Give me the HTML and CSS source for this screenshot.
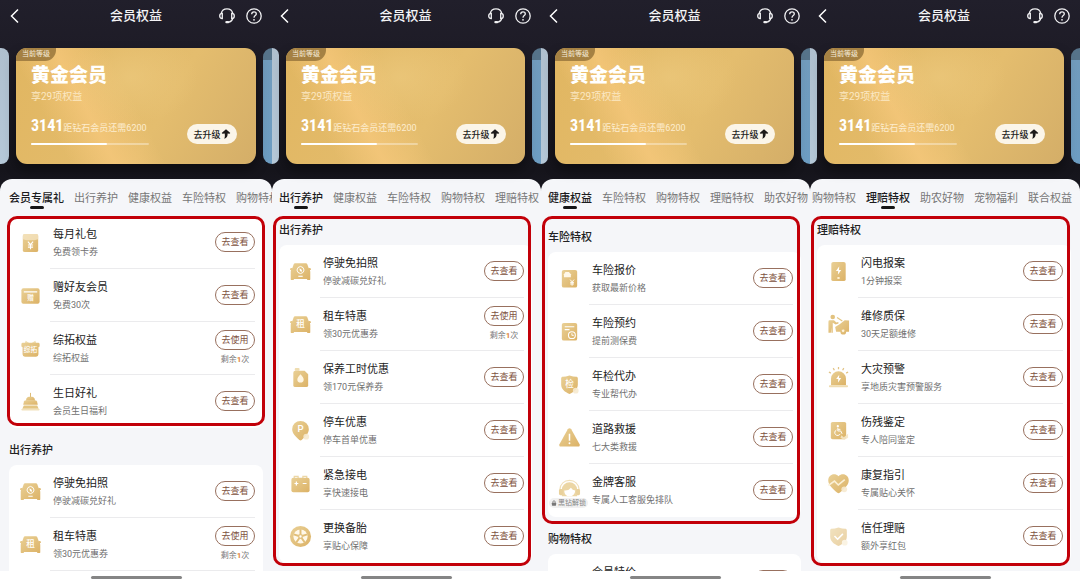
FILE: index.html
```html
<!DOCTYPE html>
<html lang="zh-CN">
<head>
<meta charset="utf-8">
<meta name="viewport" content="width=device-width, initial-scale=1">
<title>会员权益</title>
<link rel="stylesheet" href="styles.css">
</head>
<body>
<svg class="sprite" aria-hidden="true">
  <defs>
    <linearGradient id="gold" x1="0" y1="0" x2="1" y2="1"><stop offset="0" stop-color="#e9d096"/><stop offset="1" stop-color="#dcb266"/></linearGradient>
    <linearGradient id="fade" x1="0" y1="0" x2="0" y2="1"><stop offset="0" stop-color="#f3e3bd"/><stop offset="1" stop-color="#e2c383"/></linearGradient>
  </defs>
  <symbol id="back" viewBox="0 0 10 16"><path d="M8.500 1.500 2 8l6.500 6.500" fill="none" stroke="#fff" stroke-width="1.500"/></symbol>
  <symbol id="headset" viewBox="0 0 18 18"><g fill="none" stroke="#f1f1f3" stroke-width="1.300"><path d="M3.200 6.500C3.800 3.500 6 1.800 9 1.800s5.200 1.700 5.800 4.700M14.800 11.300c-.5 2.200-1.800 3.300-3.800 3.900"/><path d="M4.300 6.300v5.200C2.600 11.500 1.700 10.500 1.700 8.900S2.600 6.300 4.300 6.300ZM13.700 6.300v5.200c1.700 0 2.600-1 2.600-2.600s-.9-2.600-2.600-2.600Z"/></g><rect x="7.300" y="14" width="4" height="2.300" rx="1.100" fill="#f1f1f3"/></symbol>
  <symbol id="help" viewBox="0 0 18 18"><g fill="none" stroke="#f1f1f3" stroke-width="1.300"><circle cx="9" cy="9" r="7.200"/><path d="M6.700 7.200c0-1.500 1-2.300 2.300-2.300s2.300.8 2.300 2.100c0 1.600-2.300 1.700-2.300 3.700"/></g><circle cx="9" cy="12.800" r=".9" fill="#f1f1f3"/></symbol>
  <symbol id="up" viewBox="0 0 10 10"><path d="M5 .2 9.300 4 8.500 4.800 6.600 4.500C6.800 7 6 8.800 3.200 9.800 4 8.300 4 6.500 3.700 4.500L1.400 4.800.7 4Z" fill="#1c1a19"/></symbol>
  <symbol id="packet" viewBox="0 0 24 24"><rect x="4" y="3" width="16" height="19" rx="2" fill="url(#gold)"/><path d="M4 5a2 2 0 0 1 2-2h12a2 2 0 0 1 2 2v3.500q-8 2.500-16 0Z" fill="#f5e6c4" opacity=".75"/><path d="m9.300 11 2.700 3.200 2.700-3.200M12 14v5M9.300 14.600h5.400M9.300 16.800h5.400" fill="none" stroke="#fff" stroke-width="1.200"/></symbol>
  <symbol id="card" viewBox="0 0 24 24"><rect x="2.500" y="4.500" width="19" height="16" rx="2" fill="url(#gold)"/><path d="M5 8.200h14" stroke="#fff" stroke-width="1.200"/></symbol>
  <symbol id="gift" viewBox="0 0 24 24"><path d="M6 6.500 7 4l4 2.500M18 6.500 17 4l-4 2.500" fill="#efddb1"/><path d="M4 6h16a1.500 1.500 0 0 1 1.500 1.500V10l-1.200.7V18a2.500 2.500 0 0 1-2.500 2.500H6.200A2.500 2.500 0 0 1 3.700 18v-7.300L2.500 10V7.500A1.500 1.500 0 0 1 4 6Z" fill="url(#gold)"/></symbol>
  <symbol id="cake" viewBox="0 0 24 24"><path d="M12 3v5" stroke="#dcb970" stroke-width="1"/><path d="M8 8.500q1-1.500 2.500-1.500h3q1.500 0 2.500 1.500l1 2.700H7Z" fill="url(#gold)"/><path d="M6.500 11h11q1 0 1.300 1l.8 3.500H4.400l.8-3.500q.3-1 1.300-1Z" fill="url(#gold)"/><path d="M5 16.300h14l1.500 3.200h-17Z" fill="#e3c583"/><rect x="2.500" y="19.500" width="19" height="1.800" rx=".9" fill="#f1e1bb"/></symbol>
  <symbol id="car" viewBox="0 0 24 24"><path d="M7 3.500h10c1.200 0 1.900.5 2.300 1.500l1.300 3.700c.6-.5 1.800-.5 2.300.3.300.6 0 1.300-1 1.500l.3 1.800v7.700c0 .6-.3.900-.9.900h-1.500c-.6 0-.9-.5-1.100-1.200H5.300c-.2.700-.5 1.200-1.100 1.200H2.700c-.6 0-.9-.3-.9-.9v-7.700l.3-1.800c-1-.2-1.300-.9-1-1.500.5-.8 1.700-.8 2.300-.3L4.700 5c.4-1 1.100-1.500 2.300-1.500Z" fill="url(#gold)"/></symbol>
  <symbol id="car-leaf" viewBox="0 0 24 24"><use href="#car"/><path d="m12 6.700 2.600 1.200 1.100 2.600-1.100 2.500-2.600 1.200L9.400 13l-1.100-2.500 1.100-2.600Z" fill="none" stroke="#fff" stroke-width="1"/><path d="M11 8.800q3 .8 2.500 3.400-2.700 0-2.500-3.400Z" fill="#fff"/><path d="M9.700 17h4.600" stroke="#fff" stroke-width="1.200"/></symbol>
  <symbol id="oil" viewBox="0 0 24 24"><rect x="6" y="2" width="5" height="3" rx="1" fill="#efddb1"/><path d="M6.500 5h9.800L20 8.500V20a2 2 0 0 1-2 2H6.500a2 2 0 0 1-2-2V7a2 2 0 0 1 2-2Z" fill="url(#gold)"/><path d="M12 8.500c2 2.200 3.300 3.700 3.300 5.500a3.300 3.300 0 0 1-6.600 0c0-1.800 1.300-3.300 3.300-5.500Z" fill="#fff6e2"/></symbol>
  <symbol id="pin" viewBox="0 0 24 24"><path d="M12 2a8.700 8.700 0 0 1 8.700 8.700c0 4.500-3.900 7.800-7.500 11.200q-1.200 1-2.400 0C7.200 18.500 3.300 15.200 3.300 10.700A8.700 8.700 0 0 1 12 2Z" fill="url(#gold)"/><circle cx="18" cy="18.500" r="3" fill="#f6ead0" opacity=".9"/></symbol>
  <symbol id="battery" viewBox="0 0 24 24"><path d="M5.500 7V4.500h4V7M14.500 7V4.500h4V7" fill="none" stroke="#ecd7a7" stroke-width="1.300"/><rect x="2.500" y="6" width="19" height="15" rx="2" fill="url(#gold)"/><path d="M5.700 12h4M7.700 10v4M14.300 12h4" stroke="#fff" stroke-width="1.300"/></symbol>
  <symbol id="wheel" viewBox="0 0 24 24"><circle cx="12" cy="12" r="11" fill="url(#gold)"/><circle cx="12" cy="12" r="7.400" fill="#fff8e9"/><g stroke="#e1be78" stroke-width="2"><path d="M12 12V4.500M12 12l7.100-2.300M12 12l4.400 6.100M12 12l-4.400 6.100M12 12 4.900 9.700"/></g><circle cx="12" cy="12" r="2.600" fill="#e4c484"/><circle cx="12" cy="12" r="1.200" fill="#fff"/></symbol>
  <symbol id="quote" viewBox="0 0 24 24"><rect x="4" y="3" width="16" height="18.500" rx="2" fill="url(#gold)"/><path d="M6.200 10.800V7.500L7.700 5.300h3.700l2 2.200v3.300Z" fill="#fff8e9"/><path d="m12.700 13.200 2 2.300 2-2.300M14.700 15.500v4M12.700 16h4M12.700 17.700h4" fill="none" stroke="#fff" stroke-width="1"/></symbol>
  <symbol id="booking" viewBox="0 0 24 24"><rect x="4" y="3" width="16" height="18.500" rx="2" fill="url(#gold)"/><path d="M7 7h10M7 10h5" stroke="#fff" stroke-width="1.200"/><circle cx="14.500" cy="15.800" r="3.600" fill="#e0ba72" stroke="#fff" stroke-width="1.100"/><path d="M14.500 13.800V16h2" fill="none" stroke="#fff"/></symbol>
  <symbol id="shield" viewBox="0 0 24 24"><path d="M12 2.500q4 1.500 7 1.500c1 0 1.700.6 1.700 1.600V12c0 5-4 7.800-8.700 10C7.300 19.800 3.300 17 3.300 12V5.600C3.300 4.600 4 4 5 4q3 0 7-1.500Z" fill="url(#gold)"/></symbol>
  <symbol id="inspect" viewBox="0 0 24 24"><use href="#shield"/><circle cx="18.500" cy="18.500" r="3" fill="#f6ead0" opacity=".9"/></symbol>
  <symbol id="warn" viewBox="0 0 24 24"><path d="M10.200 3.300q1.800-2 3.600 0L22.500 19q.8 2.500-1.500 2.500H3Q.7 21.500 1.500 19Z" fill="url(#gold)"/><path d="M12 8v7.500" stroke="#fff" stroke-width="1.600"/><circle cx="12" cy="18" r="1" fill="#fff"/></symbol>
  <symbol id="agent" viewBox="0 0 24 24"><path d="M2 11C2.500 5 6.500 1.500 12 1.500S21.500 5 22 11" fill="none" stroke="#f0dfb8" stroke-width="1.300"/><path d="M4 11a8 7.500 0 0 1 16 0v7H4Z" fill="#ecd6a4"/><path d="M6.500 12q4.500.5 7-3 1.500 2.500 4.500 3-.5 6-6 6t-5.500-6Z" fill="#fff"/><rect x="1" y="10.500" width="4" height="6.500" rx="1.500" fill="#e9d19b"/><rect x="19" y="10.500" width="4" height="6.500" rx="1.500" fill="#e9d19b"/></symbol>
  <symbol id="lock" viewBox="0 0 8 8"><path d="M2.500 4V2.500a1.500 1.500 0 0 1 3 0V4" fill="none" stroke="#777"/><rect x="1.200" y="3.500" width="5.600" height="4" rx=".7" fill="#777"/></symbol>
  <symbol id="phone-bolt" viewBox="0 0 24 24"><rect x="4.500" y="2" width="15" height="20" rx="2" fill="url(#gold)"/><path d="M12.800 6.500 9.300 11.500h2.400l-.4 4 3.500-5h-2.300Z" fill="#fff"/><ellipse cx="12" cy="18.800" rx="1.500" ry="1" fill="#fff3d7"/></symbol>
  <symbol id="mechanic" viewBox="0 0 24 24"><circle cx="6" cy="4.200" r="2.400" fill="#e2c27f"/><path d="M2.800 7.500h4.500l2.500 2.300 2-.3.200 1.400-3 1L6 10.300V20.500H4.600V15L4 20.500H1.500V9Q1.500 7.500 2.800 7.500Z" fill="url(#gold)"/><path d="m8.500 14.500 5-3 5-4 4.500.3v11.700h-3a3 3 0 0 1-6 0H9.500Z" fill="url(#gold)"/><path d="m10.500 4.800 5.500 3.500" stroke="#e3c581" stroke-width="1.200"/><circle cx="16.800" cy="18.500" r="1.900" fill="#fff3dc" stroke="#e1bf7a"/></symbol>
  <symbol id="siren" viewBox="0 0 24 24"><path d="M12 1v2.500M6.500 2.200l1.200 2.200M17.500 2.200l-1.200 2.200M2 6.200l2 1.200M22 6.200l-2 1.200" stroke="#e2c384" stroke-width="1.300"/><path d="M4.200 20v-7a7.800 7.500 0 0 1 15.600 0v7Z" fill="url(#gold)"/><rect x="2" y="20.200" width="20" height="2" rx="1" fill="#efdcb0"/><path d="m12.800 9-3.300 4.600h2.300l-.4 3.800 3.400-4.800h-2.300Z" fill="#fff"/></symbol>
  <symbol id="wheelchair" viewBox="0 0 24 24"><rect x="4" y="3" width="16" height="18" rx="1.800" fill="url(#gold)"/><circle cx="11.300" cy="7.500" r="1.200" fill="#fff"/><path d="M11.300 9v3.500h3l1.500 3M11.500 10.800h2.500M9.800 11.500a3 3 0 1 0 4 4" fill="none" stroke="#fff" stroke-width="1"/><path d="m15 17 2.500 2L22 15.500v4L18 22l-4-2.500Z" fill="#f4e6c6" opacity=".9"/></symbol>
  <symbol id="heart" viewBox="0 0 24 24"><path d="M12 4.500c4-4.200 10.700-1.700 10.700 4.300 0 5-5.200 9-9.500 12.800q-1.200 1-2.400 0C6.500 17.800 1.300 13.800 1.300 8.800c0-6 6.700-8.500 10.700-4.300Z" fill="url(#gold)"/><path d="m1.500 14 6.300-4.500 4 4L18.500 8" fill="none" stroke="#fbf0d6" stroke-width="1.600"/><circle cx="18" cy="18" r="3" fill="#f6ead0" opacity=".9"/></symbol>
  <symbol id="trust" viewBox="0 0 24 24"><g opacity=".6"><use href="#shield"/></g><path d="m7.800 11.500 3.300 3.300 5.500-5.500" fill="none" stroke="#fff" stroke-width="1.600"/><circle cx="18.500" cy="18.500" r="3" fill="#faf3e3"/></symbol>
  <symbol id="tag" viewBox="0 0 24 24"><rect x="4" y="3" width="16" height="18" rx="2" fill="url(#fade)"/></symbol>
</svg>

<main class="screens">
  <section class="phone phone-first">
    <header class="bar">
      <button class="icon-btn" aria-label="返回"><svg class="back"><use href="#back"/></svg></button>
      <h1 class="bar-title">会员权益</h1>
      <div class="bar-tools"><button class="icon-btn" aria-label="客服"><svg class="tool"><use href="#headset"/></svg></button><button class="icon-btn" aria-label="帮助"><svg class="tool"><use href="#help"/></svg></button></div>
    </header>
    <div class="levels">
      <div class="peek peek-left"></div>
      <article class="level">
        <span class="level-flag">当前等级</span>
        <h2 class="level-name">黄金会员</h2>
        <p class="level-count">享29项权益</p>
        <p class="level-score"><b class="score">3141</b><span>距钻石会员还需6200</span></p>
        <div class="meter"><div class="meter-fill"></div></div>
        <button class="upgrade">去升级<svg class="up"><use href="#up"/></svg></button>
      </article>
      <div class="peek peek-right"></div>
    </div>
    <div class="sheet">
      <nav class="tabs"><a class="tab tab-on" href="#">会员专属礼</a><a class="tab" href="#">出行养护</a><a class="tab" href="#">健康权益</a><a class="tab" href="#">车险特权</a><a class="tab" href="#">购物特权</a></nav>
      <div class="scroll"><div class="track">
        <ul class="list">
          <li class="row"><div class="pic"><svg class="ico"><use href="#packet"/></svg></div><div class="body"><div class="text"><h4 class="name">每月礼包</h4><p class="note">免费领卡券</p></div><div class="act"><button class="go">去查看</button></div></div></li>
          <li class="row"><div class="pic"><svg class="ico" viewBox="0 0 24 24"><use href="#card"/><text x="12" y="17" class="glyph glyph-s">赠</text></svg></div><div class="body"><div class="text"><h4 class="name">赠好友会员</h4><p class="note">免费30次</p></div><div class="act"><button class="go">去查看</button></div></div></li>
          <li class="row"><div class="pic"><svg class="ico" viewBox="0 0 24 24"><use href="#gift"/><text x="12" y="16" class="glyph glyph-s">综拓</text></svg></div><div class="body"><div class="text"><h4 class="name">综拓权益</h4><p class="note">综拓权益</p></div><div class="act"><button class="go">去使用</button><span class="left">剩余<b>1</b>次</span></div></div></li>
          <li class="row"><div class="pic"><svg class="ico"><use href="#cake"/></svg></div><div class="body"><div class="text"><h4 class="name">生日好礼</h4><p class="note">会员生日福利</p></div><div class="act"><button class="go">去查看</button></div></div></li>
        </ul>
        <h3 class="group">出行养护</h3>
        <ul class="list">
          <li class="row"><div class="pic"><svg class="ico"><use href="#car-leaf"/></svg></div><div class="body"><div class="text"><h4 class="name">停驶免拍照</h4><p class="note">停驶减碳兑好礼</p></div><div class="act"><button class="go">去查看</button></div></div></li>
          <li class="row"><div class="pic"><svg class="ico" viewBox="0 0 24 24"><use href="#car"/><text x="12" y="15" class="glyph">租</text></svg></div><div class="body"><div class="text"><h4 class="name">租车特惠</h4><p class="note">领30元优惠券</p></div><div class="act"><button class="go">去使用</button><span class="left">剩余<b>1</b>次</span></div></div></li>
          <li class="row"></li>
        </ul>
      </div></div>
    </div>
    <footer class="home"><span class="home-line"></span></footer>
    <div class="mark mark-gifts"></div>
  </section>

  <section class="phone">
    <header class="bar">
      <button class="icon-btn" aria-label="返回"><svg class="back"><use href="#back"/></svg></button>
      <h1 class="bar-title">会员权益</h1>
      <div class="bar-tools"><button class="icon-btn" aria-label="客服"><svg class="tool"><use href="#headset"/></svg></button><button class="icon-btn" aria-label="帮助"><svg class="tool"><use href="#help"/></svg></button></div>
    </header>
    <div class="levels">
      <div class="peek peek-left"></div>
      <article class="level">
        <span class="level-flag">当前等级</span>
        <h2 class="level-name">黄金会员</h2>
        <p class="level-count">享29项权益</p>
        <p class="level-score"><b class="score">3141</b><span>距钻石会员还需6200</span></p>
        <div class="meter"><div class="meter-fill"></div></div>
        <button class="upgrade">去升级<svg class="up"><use href="#up"/></svg></button>
      </article>
      <div class="peek peek-right"></div>
    </div>
    <div class="sheet">
      <nav class="tabs"><a class="tab tab-on" href="#">出行养护</a><a class="tab" href="#">健康权益</a><a class="tab" href="#">车险特权</a><a class="tab" href="#">购物特权</a><a class="tab" href="#">理赔特权</a></nav>
      <div class="scroll"><div class="track track-long">
        <h3 class="group">出行养护</h3>
        <ul class="list">
          <li class="row"><div class="pic"><svg class="ico"><use href="#car-leaf"/></svg></div><div class="body"><div class="text"><h4 class="name">停驶免拍照</h4><p class="note">停驶减碳兑好礼</p></div><div class="act"><button class="go">去查看</button></div></div></li>
          <li class="row"><div class="pic"><svg class="ico" viewBox="0 0 24 24"><use href="#car"/><text x="12" y="15" class="glyph">租</text></svg></div><div class="body"><div class="text"><h4 class="name">租车特惠</h4><p class="note">领30元优惠券</p></div><div class="act"><button class="go">去使用</button><span class="left">剩余<b>1</b>次</span></div></div></li>
          <li class="row"><div class="pic"><svg class="ico"><use href="#oil"/></svg></div><div class="body"><div class="text"><h4 class="name">保养工时优惠</h4><p class="note">领170元保养券</p></div><div class="act"><button class="go">去查看</button></div></div></li>
          <li class="row"><div class="pic"><svg class="ico" viewBox="0 0 24 24"><use href="#pin"/><text x="12" y="14" class="glyph glyph-p">P</text></svg></div><div class="body"><div class="text"><h4 class="name">停车优惠</h4><p class="note">停车首单优惠</p></div><div class="act"><button class="go">去查看</button></div></div></li>
          <li class="row"><div class="pic"><svg class="ico"><use href="#battery"/></svg></div><div class="body"><div class="text"><h4 class="name">紧急接电</h4><p class="note">享快速接电</p></div><div class="act"><button class="go">去查看</button></div></div></li>
          <li class="row"><div class="pic"><svg class="ico"><use href="#wheel"/></svg></div><div class="body"><div class="text"><h4 class="name">更换备胎</h4><p class="note">享贴心保障</p></div><div class="act"><button class="go">去查看</button></div></div></li>
        </ul>
      </div></div>
    </div>
    <footer class="home"><span class="home-line"></span></footer>
    <div class="mark mark-long"></div>
  </section>

  <section class="phone">
    <header class="bar">
      <button class="icon-btn" aria-label="返回"><svg class="back"><use href="#back"/></svg></button>
      <h1 class="bar-title">会员权益</h1>
      <div class="bar-tools"><button class="icon-btn" aria-label="客服"><svg class="tool"><use href="#headset"/></svg></button><button class="icon-btn" aria-label="帮助"><svg class="tool"><use href="#help"/></svg></button></div>
    </header>
    <div class="levels">
      <div class="peek peek-left"></div>
      <article class="level">
        <span class="level-flag">当前等级</span>
        <h2 class="level-name">黄金会员</h2>
        <p class="level-count">享29项权益</p>
        <p class="level-score"><b class="score">3141</b><span>距钻石会员还需6200</span></p>
        <div class="meter"><div class="meter-fill"></div></div>
        <button class="upgrade">去升级<svg class="up"><use href="#up"/></svg></button>
      </article>
      <div class="peek peek-right"></div>
    </div>
    <div class="sheet">
      <nav class="tabs"><a class="tab tab-on" href="#">健康权益</a><a class="tab" href="#">车险特权</a><a class="tab" href="#">购物特权</a><a class="tab" href="#">理赔特权</a><a class="tab" href="#">助农好物</a></nav>
      <div class="scroll"><div class="track track-insure">
        <h3 class="group">车险特权</h3>
        <ul class="list">
          <li class="row"><div class="pic"><svg class="ico"><use href="#quote"/></svg></div><div class="body"><div class="text"><h4 class="name">车险报价</h4><p class="note">获取最新价格</p></div><div class="act"><button class="go">去查看</button></div></div></li>
          <li class="row"><div class="pic"><svg class="ico"><use href="#booking"/></svg></div><div class="body"><div class="text"><h4 class="name">车险预约</h4><p class="note">提前测保费</p></div><div class="act"><button class="go">去查看</button></div></div></li>
          <li class="row"><div class="pic"><svg class="ico" viewBox="0 0 24 24"><use href="#inspect"/><text x="12" y="15" class="glyph">检</text></svg></div><div class="body"><div class="text"><h4 class="name">年检代办</h4><p class="note">专业帮代办</p></div><div class="act"><button class="go">去查看</button></div></div></li>
          <li class="row"><div class="pic"><svg class="ico"><use href="#warn"/></svg></div><div class="body"><div class="text"><h4 class="name">道路救援</h4><p class="note">七大类救援</p></div><div class="act"><button class="go">去查看</button></div></div></li>
          <li class="row"><div class="pic"><svg class="ico"><use href="#agent"/></svg><span class="locked"><svg class="lock"><use href="#lock"/></svg>黑钻解锁</span></div><div class="body"><div class="text"><h4 class="name">金牌客服</h4><p class="note">专属人工客服免排队</p></div><div class="act"><button class="go">去查看</button></div></div></li>
        </ul>
        <h3 class="group">购物特权</h3>
        <ul class="list">
          <li class="row"><div class="pic"><svg class="ico"><use href="#tag"/></svg></div><div class="body"><div class="text"><h4 class="name">会员特价</h4></div><div class="act"><button class="go" aria-label="去查看"></button></div></div></li>
        </ul>
      </div></div>
    </div>
    <footer class="home"><span class="home-line"></span></footer>
    <div class="mark mark-insure"></div>
  </section>

  <section class="phone">
    <header class="bar">
      <button class="icon-btn" aria-label="返回"><svg class="back"><use href="#back"/></svg></button>
      <h1 class="bar-title">会员权益</h1>
      <div class="bar-tools"><button class="icon-btn" aria-label="客服"><svg class="tool"><use href="#headset"/></svg></button><button class="icon-btn" aria-label="帮助"><svg class="tool"><use href="#help"/></svg></button></div>
    </header>
    <div class="levels">
      <div class="peek peek-left"></div>
      <article class="level">
        <span class="level-flag">当前等级</span>
        <h2 class="level-name">黄金会员</h2>
        <p class="level-count">享29项权益</p>
        <p class="level-score"><b class="score">3141</b><span>距钻石会员还需6200</span></p>
        <div class="meter"><div class="meter-fill"></div></div>
        <button class="upgrade">去升级<svg class="up"><use href="#up"/></svg></button>
      </article>
      <div class="peek peek-right"></div>
    </div>
    <div class="sheet">
      <nav class="tabs tabs-scrolled"><a class="tab" href="#">购物特权</a><a class="tab tab-on" href="#">理赔特权</a><a class="tab" href="#">助农好物</a><a class="tab" href="#">宠物福利</a><a class="tab" href="#">联合权益</a></nav>
      <div class="scroll"><div class="track track-long">
        <h3 class="group">理赔特权</h3>
        <ul class="list">
          <li class="row"><div class="pic"><svg class="ico"><use href="#phone-bolt"/></svg></div><div class="body"><div class="text"><h4 class="name">闪电报案</h4><p class="note">1分钟报案</p></div><div class="act"><button class="go">去查看</button></div></div></li>
          <li class="row"><div class="pic"><svg class="ico"><use href="#mechanic"/></svg></div><div class="body"><div class="text"><h4 class="name">维修质保</h4><p class="note">30天足额维修</p></div><div class="act"><button class="go">去查看</button></div></div></li>
          <li class="row"><div class="pic"><svg class="ico"><use href="#siren"/></svg></div><div class="body"><div class="text"><h4 class="name">大灾预警</h4><p class="note">享地质灾害预警服务</p></div><div class="act"><button class="go">去查看</button></div></div></li>
          <li class="row"><div class="pic"><svg class="ico"><use href="#wheelchair"/></svg></div><div class="body"><div class="text"><h4 class="name">伤残鉴定</h4><p class="note">专人陪同鉴定</p></div><div class="act"><button class="go">去查看</button></div></div></li>
          <li class="row"><div class="pic"><svg class="ico"><use href="#heart"/></svg></div><div class="body"><div class="text"><h4 class="name">康复指引</h4><p class="note">专属贴心关怀</p></div><div class="act"><button class="go">去查看</button></div></div></li>
          <li class="row"><div class="pic"><svg class="ico"><use href="#trust"/></svg></div><div class="body"><div class="text"><h4 class="name">信任理赔</h4><p class="note">额外享红包</p></div><div class="act"><button class="go">去查看</button></div></div></li>
        </ul>
      </div></div>
    </div>
    <footer class="home"><span class="home-line"></span></footer>
    <div class="mark mark-long"></div>
  </section>
</main>
</body>
</html>
```
FILE: styles.css
```css
* { box-sizing: border-box; }

body {
  margin: 0;
  background: #1b1923;
  color: #222;
  font-family: Roboto, "Noto Sans CJK SC", sans-serif;
}

h1, h2, h3, h4, p, ul { margin: 0; padding: 0; font-weight: 400; }
button { padding: 0; border: 0; background: none; font-family: inherit; cursor: pointer; }
a { color: inherit; text-decoration: none; }
svg { display: block; }

.sprite { position: absolute; width: 0; height: 0; }
.glyph { fill: #fff; font-size: 9px; font-weight: 500; text-anchor: middle; }
.glyph-s { font-size: 7px; }
.glyph-p { font-size: 10px; }

.screens {
  display: grid;
  grid-template-columns: 272fr 269fr 269fr 270fr;
  height: 100vh;
}

.phone {
  --edge: 7px;
  position: relative;
  display: flex;
  flex-direction: column;
  min-width: 0;
  min-height: 0;
  background: linear-gradient(#211f2b, #1c1a24 80px, #15141b 170px, #191821 200px);
}
.phone-first { --edge: 9px; }

/* Title bar */
.bar {
  display: grid;
  grid-template-columns: 1fr auto 1fr;
  align-items: center;
  height: 32px;
  padding: 0 9px 0 var(--edge);
}
.icon-btn { display: block; justify-self: start; }
.back { width: 11px; height: 16px; }
.bar-title { color: #f4f4f6; font-size: 13px; line-height: 20px; font-weight: 500; }
.bar-tools { display: flex; justify-content: flex-end; gap: 9px; }
.tool { width: 18px; height: 18px; }

/* Membership card */
.levels { display: flex; gap: 7px; height: 116px; margin: 16px 0 15px; flex: none; }
.peek-left { width: var(--edge); border-radius: 0 8px 8px 0; background: linear-gradient(#afbfce, #b5c8d8); }
.peek-right { width: 9px; border-radius: 9px 0 0 9px; background: linear-gradient(#56738a 12px, #719bbd 12px, #6d9dc2); }
.level {
  position: relative;
  flex: 1;
  min-width: 0;
  padding: 15px 15px 0;
  border-radius: 11px;
  background:
    radial-gradient(ellipse at 48% 25%, rgba(238, 203, 128, .6), transparent 38%),
    linear-gradient(62deg, transparent 18%, rgba(248, 201, 125, .7) 33%, transparent 50%),
    linear-gradient(120deg, #e1b661, #e4bd6e 60%, #d4ae68);
  box-shadow: 0 6px 12px rgba(0, 0, 0, .4);
  color: #fff;
}
.level-flag {
  position: absolute;
  top: 0;
  left: 0;
  padding: 0 6px;
  border-radius: 11px 0 11px 0;
  background: #a58143;
  color: #f8edda;
  font-size: 7px;
  line-height: 13px;
}
.level-name { font-size: 19px; line-height: 25px; font-weight: 900; }
.level-count { color: #fbe8c3; font-size: 10px; line-height: 17px; }
.level-score { display: flex; align-items: baseline; margin-top: 11px; color: #fdedcf; font-size: 9px; line-height: 20px; }
.score { color: #fff; font-family: "Liberation Sans Narrow", "Roboto Condensed", Roboto, sans-serif; font-size: 16px; }
.meter { width: 56%; height: 2px; margin-top: 5px; border-radius: 1px; background: rgba(255, 255, 255, .35); }
.meter-fill { width: 65%; height: 2px; border-radius: 1px; background: #fff; }
.upgrade {
  position: absolute;
  right: 19px;
  bottom: 20px;
  display: flex;
  align-items: center;
  justify-content: center;
  width: 50px;
  height: 20px;
  border-radius: 10px;
  background: #fbf5e8;
  color: #222;
  font-size: 9px;
  font-weight: 500;
}
.up { width: 10px; height: 10px; }

/* Benefits sheet */
.sheet {
  display: flex;
  flex: 1;
  flex-direction: column;
  min-height: 0;
  border-radius: 12px 12px 0 0;
  background: #f5f6f9;
}
.tabs { display: flex; flex: none; gap: 10px; height: 37px; padding-left: var(--edge); overflow: hidden; }
.tabs-scrolled { padding-left: 2px; }
.tab { position: relative; flex: none; height: 30px; color: #777; font-size: 11px; line-height: 40px; }
.tab-on { color: #1c1c1e; font-weight: 500; }
.tab-on::after {
  content: "";
  position: absolute;
  bottom: 0;
  left: 50%;
  width: 14px;
  height: 3px;
  margin-left: -7px;
  border-radius: 2px;
  background: #151517;
}

.scroll { flex: 1; min-height: 0; overflow: hidden; padding: 0 9px 0 var(--edge); }
.track-insure { margin-top: -1px; }
.track-long { margin-top: -8px; }
.group { padding-top: 8px; font-size: 11px; line-height: 29px; font-weight: 500; }
.list { overflow: hidden; border-radius: 8px; background: #fff; list-style: none; }
.row { display: flex; height: 53px; }
.pic { position: relative; display: flex; flex: none; align-items: center; justify-content: center; width: 41px; padding-left: 2px; }
.ico { width: 23px; height: 23px; }
.locked {
  position: absolute;
  bottom: 9px;
  left: 1px;
  display: flex;
  align-items: center;
  gap: 1px;
  padding: 0 2px;
  border-radius: 5px;
  background: rgba(238, 238, 239, .85);
  color: #888;
  font-size: 7px;
  line-height: 10px;
  white-space: nowrap;
}
.lock { width: 6px; height: 6px; }
.body { display: flex; flex: 1; justify-content: space-between; min-width: 0; margin-right: 8px; padding-left: 3px; border-bottom: 1px solid #ebebed; }
.row:last-child .body { border-bottom-color: transparent; }
.text { padding-top: 11px; }
.name { color: #222; font-size: 11px; line-height: 16px; }
.note { margin-top: 2px; color: #707070; font-size: 9px; line-height: 14px; }
.act { display: flex; flex-direction: column; align-items: center; justify-content: center; gap: 4px; }
.go { width: 40px; height: 20px; border: 1px solid #98705e; border-radius: 10px; color: #80513d; font-size: 9px; line-height: 18px; }
.left { color: #777; font-size: 8px; line-height: 12px; }
.left b { color: #e08540; }

.home { display: flex; flex: none; align-items: center; justify-content: center; height: 12px; background: #fff; }
.home-line { width: 91px; height: 3px; border-radius: 2px; background: #858585; }

/* Red callout frames laid over the screens */
.mark { position: absolute; top: 216px; right: 10px; left: 1px; border: 3px solid #c20009; border-radius: 10px; pointer-events: none; }
.mark-gifts { right: 7px; left: 7px; height: 210px; }
.mark-long { height: 350px; }
.mark-insure { height: 308px; }
```
